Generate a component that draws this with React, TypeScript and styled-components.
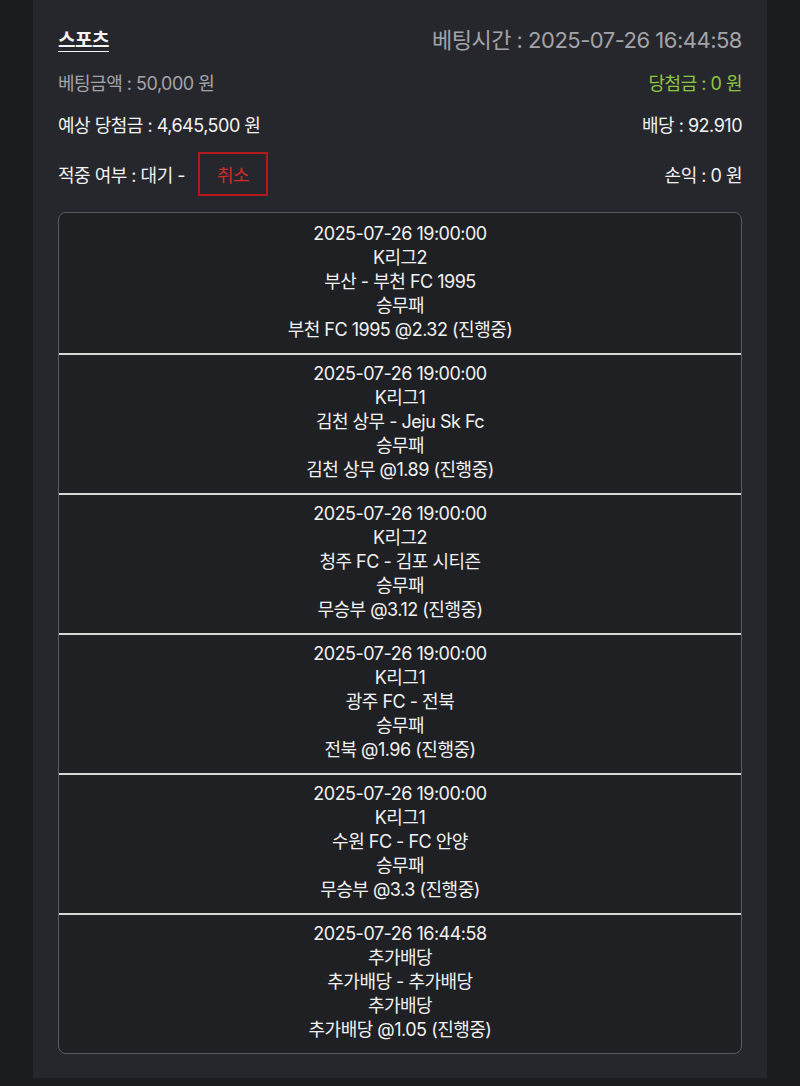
import React from 'react'
import styled, { createGlobalStyle } from 'styled-components';

const GlobalStyle = createGlobalStyle`
  html, body {
    margin: 0;
    padding: 0;
    background: #1b1c20;
  }
  body {
    font-family: Inter, "Noto Sans CJK KR", sans-serif;
    color: #f2f2f2;
    letter-spacing: -0.5px;
  }
`

interface Bet {
  time: string,
  league: string,
  match: string,
  market: string,
  pick: string,
}

const bets: Bet[] = [
  { time: '2025-07-26 19:00:00', league: 'K리그2', match: '부산 - 부천 FC 1995', market: '승무패', pick: '부천 FC 1995 @2.32 (진행중)' },
  { time: '2025-07-26 19:00:00', league: 'K리그1', match: '김천 상무 - Jeju Sk Fc', market: '승무패', pick: '김천 상무 @1.89 (진행중)' },
  { time: '2025-07-26 19:00:00', league: 'K리그2', match: '청주 FC - 김포 시티즌', market: '승무패', pick: '무승부 @3.12 (진행중)' },
  { time: '2025-07-26 19:00:00', league: 'K리그1', match: '광주 FC - 전북', market: '승무패', pick: '전북 @1.96 (진행중)' },
  { time: '2025-07-26 19:00:00', league: 'K리그1', match: '수원 FC - FC 안양', market: '승무패', pick: '무승부 @3.3 (진행중)' },
  { time: '2025-07-26 16:44:58', league: '추가배당', match: '추가배당 - 추가배당', market: '추가배당', pick: '추가배당 @1.05 (진행중)' },
]

const Panel = styled.div`
  margin: 0 33px;
  min-height: 1077px;
  box-sizing: border-box;
  background: #26272c;
  padding: 23px 25px 24px;
`

const Row = styled.div<{ $height: number, $gap?: number }>`
  display: flex;
  justify-content: space-between;
  align-items: center;
  height: ${p => p.$height}px;
  margin-top: ${p => p.$gap ?? 0}px;
`

const Title = styled.span`
  font-size: 19px;
  font-weight: 600;
  color: #f4f4f4;
  text-decoration: underline;
  text-underline-offset: 4px;
  text-decoration-thickness: 1px;
`

const Text = styled.span<{ $tone?: 'muted' | 'green' | 'white', $size?: number }>`
  font-size: ${p => p.$size ?? 18}px;
  color: ${p => p.$tone === 'muted' ? '#a3a4a8' : p.$tone === 'green' ? '#8dc63f' : '#f2f2f2'};
`

const Left = styled.div`
  display: flex;
  align-items: center;
  gap: 13px;
`

const CancelButton = styled.button`
  width: 70px;
  height: 44px;
  box-sizing: border-box;
  border: 2px solid #b3191c;
  background: transparent;
  color: #d42a2a;
  font-family: inherit;
  font-size: 18px;
  letter-spacing: -0.5px;
  cursor: pointer;
`

const Table = styled.div`
  margin-top: 16px;
  border: 1px solid #5a5b60;
  border-radius: 8px;
  background: #1f2024;
  overflow: hidden;
`

const Cell = styled.div`
  height: 140px;
  box-sizing: border-box;
  padding: 9px 0;
  display: flex;
  flex-direction: column;
  align-items: center;
  font-size: 18px;
  line-height: 24.2px;
  color: #f2f2f2;

  & + & {
    border-top: 2px solid #d8d8d8;
    padding-top: 7px;
  }
`

export default function App() {
  return (
    <>
      <GlobalStyle />
      <Panel>
        <Row $height={30}>
          <Title>스포츠</Title>
          <Text $tone="muted" $size={22}>베팅시간 : 2025-07-26 16:44:58</Text>
        </Row>
        <Row $height={30} $gap={14}>
          <Text $tone="muted">베팅금액 : 50,000 원</Text>
          <Text $tone="green">당첨금 : 0 원</Text>
        </Row>
        <Row $height={30} $gap={12}>
          <Text>예상 당첨금 : 4,645,500 원</Text>
          <Text>배당 : 92.910</Text>
        </Row>
        <Row $height={44} $gap={12.5}>
          <Left>
            <Text>적중 여부 : 대기 -</Text>
            <CancelButton>취소</CancelButton>
          </Left>
          <Text>손익 : 0 원</Text>
        </Row>
        <Table>
          {bets.map((b, i) => (
            <Cell key={i}>
              <div>{b.time}</div>
              <div>{b.league}</div>
              <div>{b.match}</div>
              <div>{b.market}</div>
              <div>{b.pick}</div>
            </Cell>
          ))}
        </Table>
      </Panel>
    </>
  )
}
